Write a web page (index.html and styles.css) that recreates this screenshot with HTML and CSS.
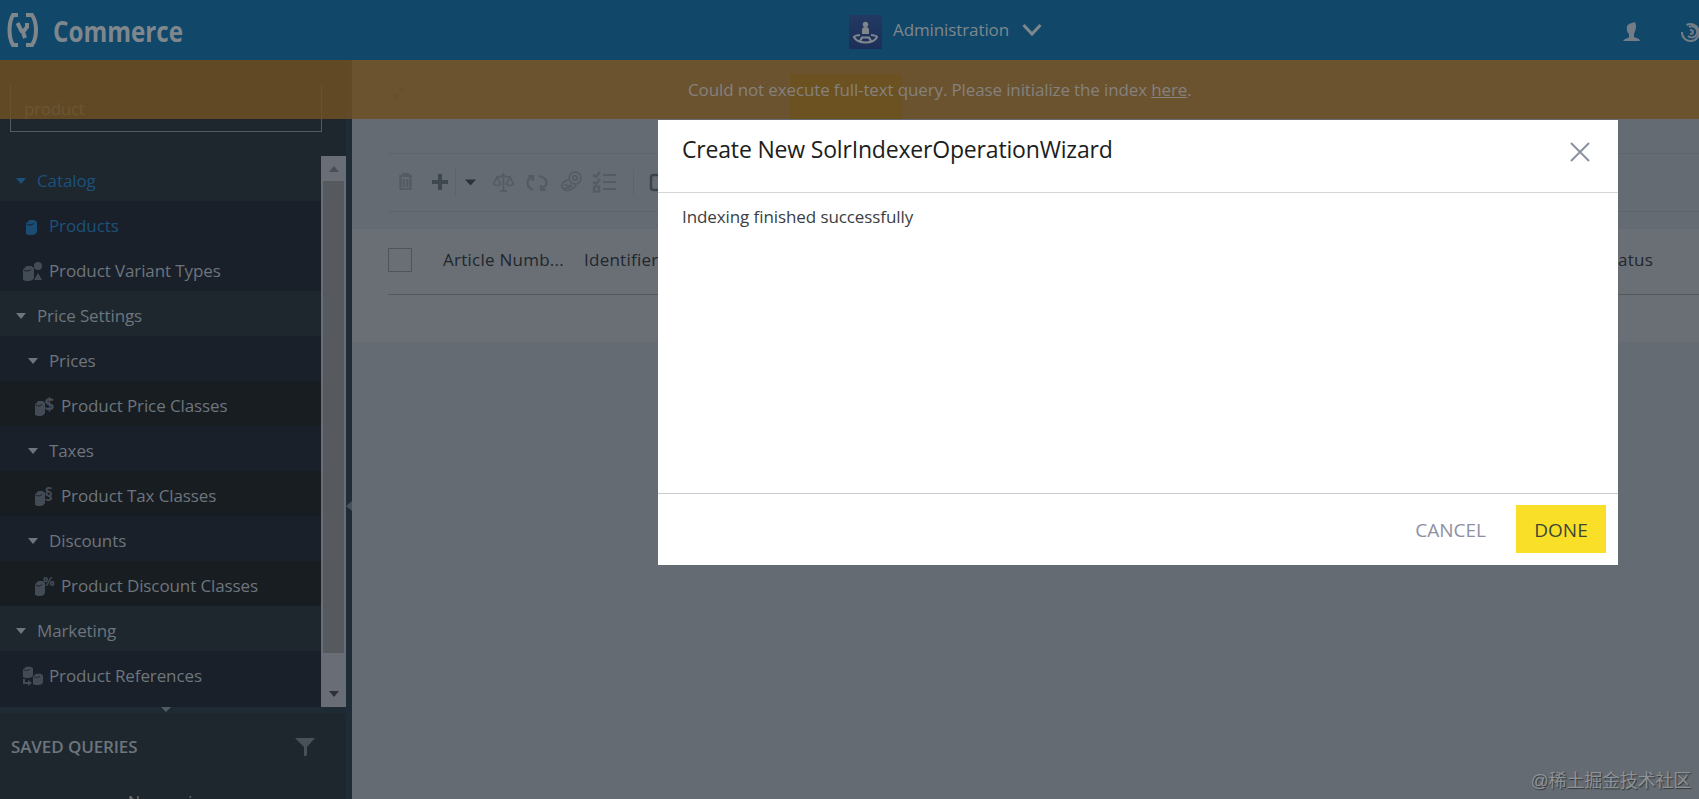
FILE: index.html
```
<!DOCTYPE html>
<html lang="en">
<head>
    <meta charset="UTF-8">
    <meta name="viewport" content="width=device-width, initial-scale=1.0">
    <title>Commerce - Administration</title>
    <link rel="stylesheet" href="styles.css">
</head>
<body>
    <!-- shared icon shapes -->
    <svg class="symbols">
        <symbol id="jar" viewBox="0 0 11 16" preserveAspectRatio="none">
            <path d="M0 4.5 3.5 1h5L11 3v10l-1.5 2-3 1H3l-3-1z"/>
            <path class="cut" d="M1 5.200c2 1.200 5 1 7-.8"/>
        </symbol>
    </svg>
    <div class="header">
        <svg class="logo" width="32" height="36" viewBox="0 0 32 36">
            <path d="M12 3H7Q3.500 9 3.500 18T7 33h5M20 3h6Q30 9 30 18t-4 15h-6"/>
            <path d="M11.500 11l4.500 9M21 11v4l-4 5 2 6"/>
        </svg>
        <svg class="brand" width="134" height="42"><text x="0" y="33" textLength="130" lengthAdjust="spacingAndGlyphs">Commerce</text></svg>
        <div class="perspective">
            <svg class="persp-icon" width="33" height="34" viewBox="0 0 33 34">
                <circle cx="16.500" cy="9.500" r="2.700"/>
                <path d="M13 19v-4q0-3 3.500-3t3.500 3v4z"/>
                <path class="ring" d="M11 20c-4 .5-6 1-6 2 2 4 6 5.500 11.500 5.500S26 26 28 22c0-1-2-1.500-6-2M11 26l2-3.500h7l2 3.500"/>
            </svg>
            <span>Administration</span>
            <svg class="chevron" width="20" height="14" viewBox="0 0 20 14"><path d="M1.500 2 10 11l8.500-9"/></svg>
        </div>
        <div class="user-area">
            <svg class="user" width="18" height="20" viewBox="0 0 18 20"><path d="M4 4q2-3 5-3l3-1q2 4 .5 8L11 12v3l5 2 1 2H0l2-2 4-1.500V12Q3 9 4 4z"/></svg>
            <svg class="swirl" width="20" height="20" viewBox="0 0 20 20"><path d="M5.500 3A8.500 8.500 0 1 1 1 10M8 5a5.500 5.500 0 1 1-1 9M9 8q3 0 3 2t-3 2"/></svg>
        </div>
    </div>
    <div class="banner">Could not execute full-text query. Please initialize the index&nbsp;<a class="here">here</a>.</div>

    <div class="page">
        <div class="sidebar">
            <div class="filter">product</div>
            <div class="tree-box">
                <div class="tree">
                    <div class="row active"><i class="arrow"></i><span>Catalog</span></div>
                    <div class="row lvl2 leaf active"><svg class="ico"><use href="#jar" x="4" y="4" width="11" height="16"/></svg><span>Products</span></div>
                    <div class="row lvl2 leaf"><svg class="ico"><use href="#jar" x="1" y="5" width="11" height="16"/><circle cx="16" cy="6" r="4"/><path d="M12 20l4-7 4 7z"/></svg><span>Product Variant Types</span></div>
                    <div class="row"><i class="arrow"></i><span>Price Settings</span></div>
                    <div class="row lvl2"><i class="arrow"></i><span>Prices</span></div>
                    <div class="row lvl3 leaf"><svg class="ico"><use href="#jar" x="1" y="5" width="10" height="16"/><text x="10.500" y="16">$</text></svg><span>Product Price Classes</span></div>
                    <div class="row lvl2"><i class="arrow"></i><span>Taxes</span></div>
                    <div class="row lvl3 leaf"><svg class="ico"><use href="#jar" x="1" y="5" width="10" height="16"/><text x="10.500" y="16">§</text></svg><span>Product Tax Classes</span></div>
                    <div class="row lvl2"><i class="arrow"></i><span>Discounts</span></div>
                    <div class="row lvl3 leaf"><svg class="ico"><use href="#jar" x="1" y="5" width="10" height="16"/><text class="pct" x="9" y="11">%</text></svg><span>Product Discount Classes</span></div>
                    <div class="row"><i class="arrow"></i><span>Marketing</span></div>
                    <div class="row lvl2 leaf"><svg class="ico"><use href="#jar" x="1" y="1" width="10" height="12"/><use href="#jar" x="11" y="8" width="10" height="12"/><path d="M1 14v5h5v2l4-3-4-3v2H3v-3z"/></svg><span>Product References</span></div>
                </div>
                <div class="scroll">
                    <i class="up"></i>
                    <div class="thumb"></div>
                    <i class="down"></i>
                </div>
            </div>
            <div class="split-h"><i></i></div>
            <div class="queries-head">
                <span>SAVED QUERIES</span>
                <svg width="20" height="20" viewBox="0 0 20 20"><path d="M0 1h20l-8 9v8l-2 1.500-1-1V10z"/></svg>
            </div>
            <div class="no-queries">No queries</div>
        </div>
        <div class="split-v"><i></i></div>

        <div class="content">
            <div class="search-bar">
                <svg class="tool-icon" width="18" height="18" viewBox="0 0 18 18"><path d="M3 15v-5h5v5zM9 9V3h5v6z"/></svg>
                <div class="search-btn"></div>
            </div>
            <div class="toolbar">
                <svg width="270" height="36" viewBox="0 0 270 36">
                    <g class="dim">
                        <path class="thick" d="M11 12h13M15 12v-2h5v2M12.500 13v12h10V13M15.700 15v8M19.300 15v8"/>
                        <path d="M115.500 9v18M112 27h7M109 13q4 0 6.500-1.500Q118 13 122 13M109 13l-3.500 7q3.500 3 7 0zM122 13l-3.500 7q3.500 3 7 0z"/>
                        <path class="thick" d="M145 26q-7-3-5-10l4-3M140 12h5v5M151 12q9 2 7 9l-4 4M158 26h-5v-5"/>
                        <circle cx="187" cy="14" r="6"/><circle cx="187" cy="14" r="2.200"/>
                        <path d="M180 16q-7 2-6 7 2 5 8 3 5-2 6-5M177 20q2 3 7 1M176 24q4 1 8-2"/>
                        <path class="thick" d="M215 11h13M215 18h13M215 25h13M205 11l3 2 4-5M205 18l3 2 4-5M206 22.500h5v5h-5z"/>
                    </g>
                    <path class="plus" d="M52 10v16M44 18h16"/>
                    <path class="caret" d="M77 15.500h11l-5.500 6z"/>
                    <path class="sep" d="M67.500 4v28M245.500 5v26"/>
                    <path class="box" d="M276 11h-10q-3 0-3 2v11q0 2 3 2h10"/>
                </svg>
            </div>
            <div class="table">
                <div class="thead">
                    <div class="check"></div>
                    <span class="article">Article Numb...</span>
                    <span>Identifier</span>
                    <span class="status">Status</span>
                </div>
            </div>
        </div>
    </div>

    <div class="modal">
        <div class="modal-head">
            <span>Create New SolrIndexerOperationWizard</span>
            <svg width="20" height="20" viewBox="0 0 20 20"><path d="M1 1l18 18M19 1 1 19"/></svg>
        </div>
        <div class="modal-body">Indexing finished successfully</div>
        <div class="modal-foot">
            <button class="btn cancel">CANCEL</button>
            <button class="btn done">DONE</button>
        </div>
    </div>
    <div class="watermark">@稀土掘金技术社区</div>
</body>
</html>
```
FILE: styles.css
```
*{
    box-sizing: border-box;
}
body{
    margin: 0;
    height: 799px;
    overflow: hidden;
    position: relative;
    display: flex;
    flex-direction: column;
    background-color: #646b72;
    font-family: "Open Sans", "Noto Sans", sans-serif;
    font-size: 17px;
    color: #6d757d;
}
svg{
    display: block;
    flex: none;
}
.symbols{
    position: absolute;
    width: 0;
    height: 0;
}

/* header */
.header{
    height: 60px;
    flex: none;
    display: grid;
    grid-template-columns: 47px 796px 1fr auto;
    align-items: center;
    padding-left: 6px;
    background-color: #11486a;
    color: #7f878d;
}
.logo path{
    fill: none;
    stroke: #7f878d;
    stroke-width: 4;
}
.brand{
    overflow: visible;
}
.brand text{
    font-size: 29px;
    font-weight: 700;
    fill: #7f878d;
}
.perspective{
    display: flex;
    align-items: center;
}
.perspective span{
    margin: -1px 13px 0 11px;
    letter-spacing: -.1px;
}
.persp-icon{
    background: linear-gradient(#223962, #1c2f58);
    fill: #7f878d;
    margin-top: 4px;
}
.persp-icon .ring{
    fill: none;
    stroke: #7f878d;
    stroke-width: 2.200;
}
.chevron path{
    fill: none;
    stroke: #7f878d;
    stroke-width: 3;
}
.user-area{
    display: flex;
    align-items: center;
    gap: 40px;
    width: 75px;
    margin-right: 1px;
    padding-top: 3px;
}
.user{
    fill: #747d85;
}
.swirl{
    fill: none;
    stroke: #747d85;
    stroke-width: 2;
}
.banner{
    position: absolute;
    top: 60px;
    left: 0;
    width: 100%;
    height: 59px;
    z-index: 1;
    display: flex;
    align-items: center;
    padding-left: 688px;
    letter-spacing: -.13px;
    color: #85817e;
    background-color: rgba(108, 79, 37, .86);
}
.here{
    text-decoration: underline;
}

/* sidebar */
.page{
    display: flex;
    flex: 1;
    min-height: 0;
}
.sidebar{
    width: 346px;
    flex: none;
    overflow: hidden;
    background-color: #1e272e;
    letter-spacing: -.11px;
}
.filter{
    margin: 24px 24px 24px 10px;
    height: 48px;
    padding: 14px 13px;
    border: 1px solid #535b60;
    border-top: 0;
    line-height: 22px;
    letter-spacing: -.3px;
}
.tree-box{
    display: flex;
    height: 551px;
    background-color: #1a2029;
}
.tree{
    flex: 1;
}
.row{
    display: flex;
    align-items: center;
    height: 45px;
    padding: 4px 0 0 16px;
    background-color: #1e272e;
}
.row.lvl2{
    padding-left: 28px;
    background-color: #1a2029;
}
.row.lvl3{
    background-color: #181d22;
}
.row.lvl2.leaf{
    padding-left: 22px;
}
.row.lvl3.leaf{
    padding-left: 34px;
}
.row.active{
    color: #1c517b;
}
.arrow{
    border: 5px solid transparent;
    border-top: 6px solid;
    border-bottom: 0;
    margin: 0 11px 0 0;
}
.ico{
    width: 22px;
    height: 22px;
    margin-right: 5px;
    overflow: visible;
    fill: #434c55;
}
.active .ico{
    fill: #1b4c73;
}
.ico text{
    font-size: 17px;
    font-weight: 700;
}
.ico .pct{
    font-size: 13px;
}
.cut{
    fill: none;
    stroke: #1a2029;
    stroke-width: 1;
}
.scroll{
    width: 25px;
    display: flex;
    flex-direction: column;
    align-items: center;
    background-color: #696e76;
}
.thumb{
    width: 21px;
    height: 472px;
    background-color: #565a5f;
}
.up{
    border: 5px solid transparent;
    border-top: 0;
    border-bottom: 6px solid #4a4e55;
    margin: 10px 0 9px;
}
.down{
    border: 5px solid transparent;
    border-bottom: 0;
    border-top: 6px solid #2e3238;
    margin-top: 38px;
}
.split-h{
    height: 6px;
    background-color: #1e2a34;
}
.split-h i{
    display: block;
    width: 10px;
    margin-left: 161px;
    border: 5px solid transparent;
    border-bottom: 0;
    border-top-color: #515b64;
}
.queries-head{
    display: flex;
    align-items: center;
    justify-content: space-between;
    height: 67px;
    padding: 0 31px 0 11px;
    font-size: 17px;
    font-weight: 600;
}
.queries-head svg{
    fill: #47515a;
}
.no-queries{
    margin-top: 11px;
    padding-left: 128px;
    font-size: 16px;
    line-height: 22px;
}
.split-v{
    width: 6px;
    flex: none;
    display: flex;
    align-items: center;
    background-color: #1f2b37;
}
.split-v i{
    margin-top: 153px;
    border: 5px solid transparent;
    border-left: 0;
    border-right: 6px solid #46515b;
}

/* content */
.content{
    flex: 1;
    overflow: hidden;
}
.search-bar{
    display: flex;
    align-items: flex-start;
    height: 93px;
    padding: 14px 0 0 38px;
}
.tool-icon{
    margin-top: 10px;
    fill: #4d555c;
}
.search-btn{
    width: 112px;
    height: 45px;
    margin-left: 382px;
    background-color: #6c5a08;
}
.toolbar{
    height: 59px;
    margin-left: 36px;
    padding-top: 10px;
    border-top: 1px solid #5d656c;
    border-bottom: 1px solid #5d656c;
}
.toolbar svg{
    fill: none;
    stroke: #535b63;
    stroke-width: 1.600;
}
.toolbar .thick{
    stroke-width: 2.200;
}
.toolbar .plus{
    stroke: #3f474f;
    stroke-width: 4;
}
.toolbar .caret{
    fill: #2b3239;
    stroke: none;
}
.toolbar .sep{
    stroke: #5d656c;
    stroke-width: 1;
}
.toolbar .box{
    stroke: #3c444b;
    stroke-width: 2.500;
}
.table{
    height: 113px;
    margin-top: 17px;
    padding-left: 36px;
    background-color: #6a6f76;
}
.thead{
    display: flex;
    align-items: center;
    height: 66px;
    padding-bottom: 4px;
    border-bottom: 1px solid #53585d;
    color: #21262d;
    font-weight: 500;
    font-size: 17px;
    letter-spacing: .25px;
}
.check{
    width: 24px;
    height: 24px;
    border: 1px solid #4e5459;
    margin-right: 31px;
}
.article{
    width: 141px;
}
.status{
    margin: 0 46px 0 auto;
}

/* wizard */
.modal{
    position: absolute;
    left: 658px;
    top: 120px;
    z-index: 2;
    display: flex;
    flex-direction: column;
    width: 960px;
    height: 445px;
    background-color: #fff;
    color: #1b1d20;
}
.modal-head{
    display: flex;
    justify-content: space-between;
    height: 73px;
    padding: 13px 28px 0 24px;
    border-bottom: 1px solid #d3d5d9;
    font-size: 23px;
    line-height: 32px;
    letter-spacing: -.18px;
}
.modal-head svg{
    margin-top: 9px;
    stroke: #8b91a0;
    stroke-width: 2;
}
.modal-body{
    flex: 1;
    padding: 12px 24px;
    font-size: 17px;
    line-height: 24px;
    letter-spacing: -.09px;
    color: #3a3e43;
}
.modal-foot{
    display: flex;
    justify-content: flex-end;
    align-items: flex-start;
    height: 72px;
    padding: 11px 12px 0;
    gap: 12px;
    border-top: 1px solid #c9cbd2;
}
.btn{
    height: 48px;
    padding: 1px 18px 0;
    border: 0;
    font-family: inherit;
    font-size: 19px;
    background-color: #fff;
    color: #8c91a3;
}
.done{
    width: 90px;
    background-color: #fadf29;
    color: #3a4834;
}
.watermark{
    position: absolute;
    right: 8px;
    bottom: 5px;
    font-family: "Liberation Sans", "Noto Sans CJK SC", sans-serif;
    font-size: 18px;
    line-height: 26px;
    letter-spacing: -.2px;
    color: #8d9296;
    text-shadow: 1px 1px 1px #33383d;
}
```
